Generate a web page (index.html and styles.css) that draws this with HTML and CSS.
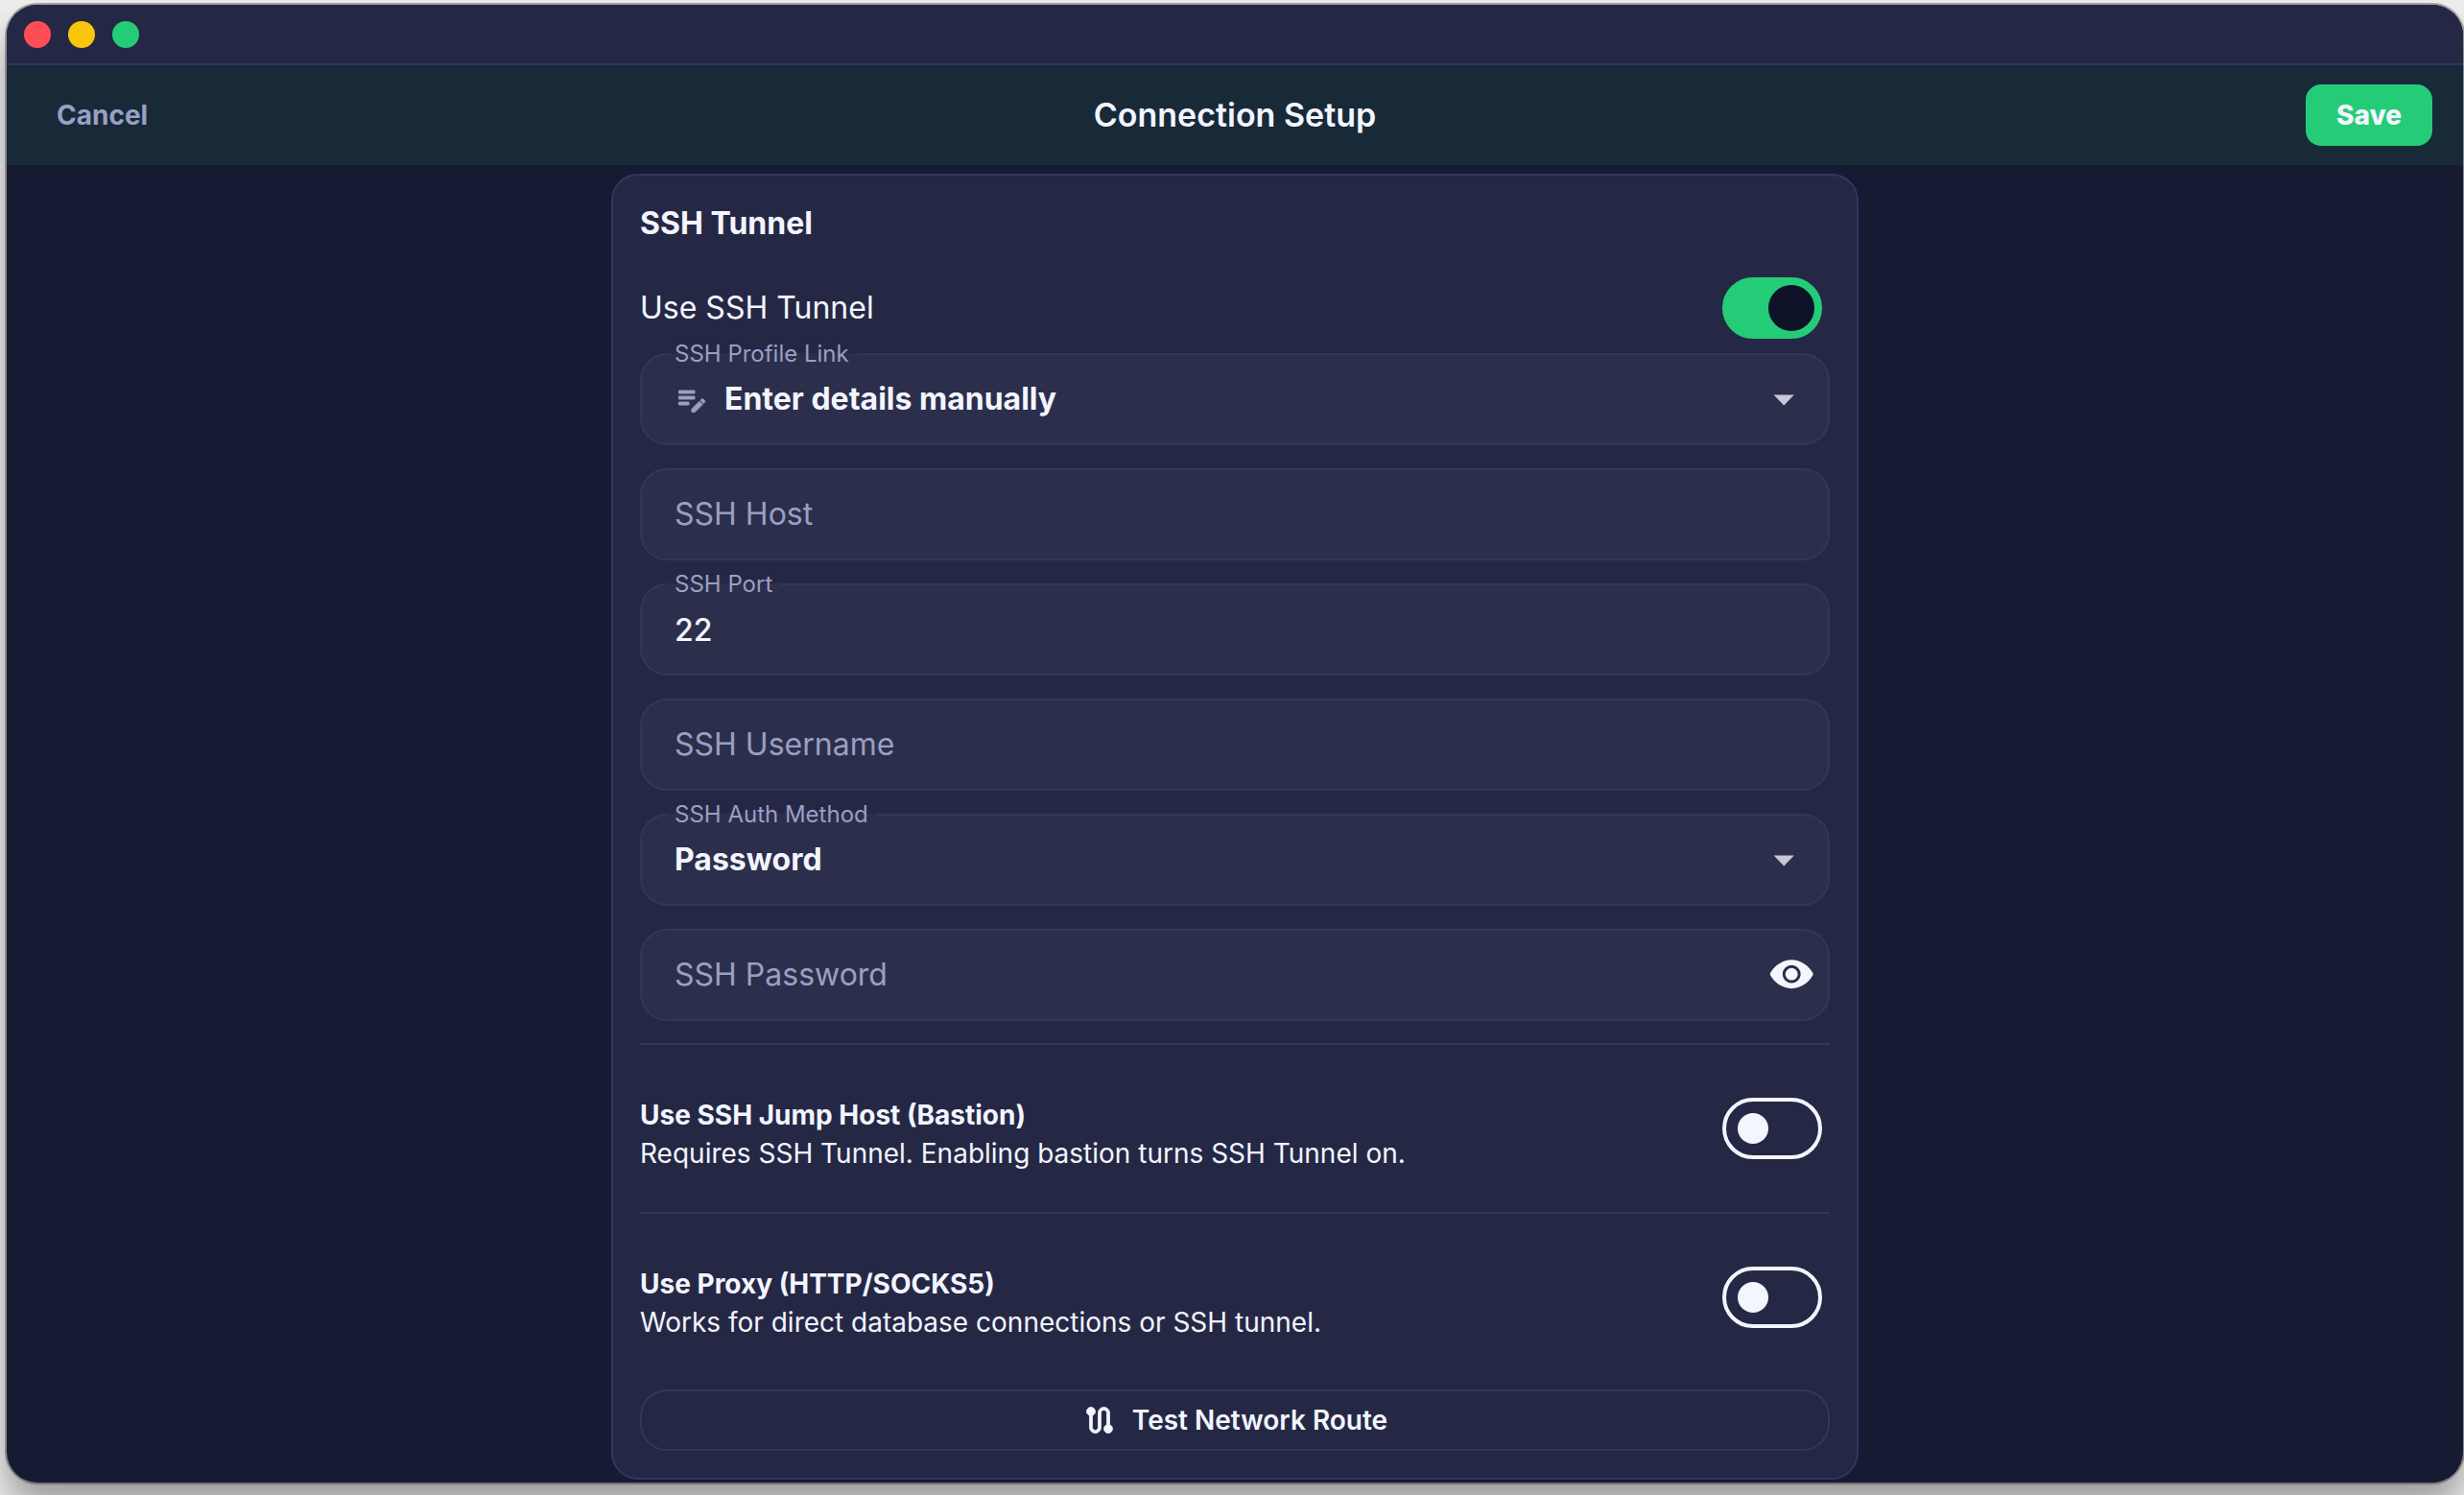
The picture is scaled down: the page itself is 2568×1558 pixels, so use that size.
FILE: index.html
```html
<!DOCTYPE html>
<html lang="en">
<head>
    <meta charset="UTF-8">
    <meta name="viewport" content="width=device-width, initial-scale=1.0">
    <title>Connection Setup</title>
    <link rel="stylesheet" href="styles.css">
</head>
<body>
    <div class="window">
        <div class="titlebar">
            <span class="dot dot-close"></span>
            <span class="dot dot-minimize"></span>
            <span class="dot dot-zoom"></span>
        </div>

        <header class="header">
            <button type="button" class="btn-cancel">Cancel</button>
            <h1>Connection Setup</h1>
            <button type="submit" form="ssh-form" class="btn-save">Save</button>
        </header>

        <main class="content">
            <form class="card" id="ssh-form">
                <h2>SSH Tunnel</h2>

                <div class="switch-row">
                    <label for="use-ssh">Use SSH Tunnel</label>
                    <input type="checkbox" class="switch" id="use-ssh" checked>
                </div>

                <div class="fields">
                    <div class="field has-icon">
                        <select id="ssh-profile">
                            <option>Enter details manually</option>
                        </select>
                        <label for="ssh-profile">SSH Profile Link</label>
                        <svg class="lead-icon" viewBox="0 0 24 24"><path d="M3 10h11v2H3v-2zm0-2h11V6H3v2zm0 8h7v-2H3v2zm15.01-3.13.71-.71c.39-.39 1.02-.39 1.41 0l.71.71c.39.39.39 1.02 0 1.41l-.71.71-2.12-2.12zm-.71.71-5.3 5.3V21h2.12l5.3-5.3-2.12-2.12z"/></svg>
                        <svg class="arrow" viewBox="0 0 24 24"><path d="M6.8 9.8h10.6L12.1 15.2z"/></svg>
                    </div>

                    <div class="field">
                        <input type="text" id="ssh-host" placeholder=" ">
                        <label for="ssh-host">SSH Host</label>
                    </div>

                    <div class="field">
                        <input type="text" id="ssh-port" placeholder=" " value="22">
                        <label for="ssh-port">SSH Port</label>
                    </div>

                    <div class="field">
                        <input type="text" id="ssh-user" placeholder=" ">
                        <label for="ssh-user">SSH Username</label>
                    </div>

                    <div class="field">
                        <select id="ssh-auth">
                            <option>Password</option>
                            <option>Private Key</option>
                        </select>
                        <label for="ssh-auth">SSH Auth Method</label>
                        <svg class="arrow" viewBox="0 0 24 24"><path d="M6.8 9.8h10.6L12.1 15.2z"/></svg>
                    </div>

                    <div class="field">
                        <input type="password" id="ssh-password" placeholder=" ">
                        <label for="ssh-password">SSH Password</label>
                        <button type="button" class="btn-eye" aria-label="Show password">
                            <svg viewBox="0 0 24 24"><path fill-rule="evenodd" d="M12.1 4.1C7.6 4.1 3.2 7 1.1 10.9c-.3.5-.3.9 0 1.4 2.1 3.9 6.5 6.8 11 6.8s8.9-2.9 11-6.8c.3-.5.3-.9 0-1.4-2.1-3.9-6.5-6.8-11-6.8zM12.1 16.3a4.7 4.7 0 1 1 0-9.4 4.7 4.7 0 0 1 0 9.4z"/><circle cx="12.1" cy="11.6" r="3.2"/></svg>
                        </button>
                    </div>
                </div>

                <div class="option">
                    <label for="use-bastion">
                        <strong>Use SSH Jump Host (Bastion)</strong>
                        <span>Requires SSH Tunnel. Enabling bastion turns SSH Tunnel on.</span>
                    </label>
                    <input type="checkbox" class="switch" id="use-bastion">
                </div>

                <div class="option">
                    <label for="use-proxy">
                        <strong>Use Proxy (HTTP/SOCKS5)</strong>
                        <span>Works for direct database connections or SSH tunnel.</span>
                    </label>
                    <input type="checkbox" class="switch" id="use-proxy">
                </div>

                <button type="button" class="btn-test">
                    <svg viewBox="0 0 24 24"><path d="M19 15.18V7c0-2.21-1.79-4-4-4s-4 1.79-4 4v10c0 1.1-.9 2-2 2s-2-.9-2-2V8.82C8.16 8.4 9 7.3 9 6c0-1.66-1.34-3-3-3S3 4.34 3 6c0 1.3.84 2.4 2 2.82V17c0 2.21 1.79 4 4 4s4-1.79 4-4V7c0-1.1.9-2 2-2s2 .9 2 2v8.18c-1.16.41-2 1.51-2 2.82 0 1.66 1.34 3 3 3s3-1.34 3-3c0-1.3-.84-2.4-2-2.82z"/></svg>
                    Test Network Route
                </button>
            </form>
        </main>
    </div>
</body>
</html>
```

FILE: styles.css
```css
:root {
    --bg: #171a33;
    --surface: #252845;
    --field: #2c2f4b;
    --line: #30375f;
    --text: #f3f5ff;
    --muted: #9a9fc4;
    --green: #24cc78;
}

* {
    box-sizing: border-box;
}

body {
    margin: 0;
    padding: 5px 1px 13px 7px;
    background: #eeeeee;
    color: var(--text);
    font-family: Inter, "Noto Sans", sans-serif;
    font-size: 32px;
    line-height: 40px;
}

button,
input,
select {
    font: inherit;
    color: inherit;
}

button {
    border: none;
    background: none;
    padding: 0;
    cursor: pointer;
}

svg {
    display: block;
    fill: currentColor;
}

.window {
    display: flex;
    flex-direction: column;
    min-height: calc(100vh - 18px);
    background: var(--bg);
    border-radius: 32px;
    overflow: hidden;
    box-shadow: 0 0 0 2px rgba(0, 0, 0, 0.3), 0 24px 36px rgba(0, 0, 0, 0.35);
}

.titlebar {
    display: flex;
    align-items: center;
    gap: 18px;
    height: 63px;
    padding: 0 18px;
    background: var(--surface);
    border-bottom: 2px solid #2f355f;
}

.dot {
    width: 28px;
    height: 28px;
    border-radius: 50%;
}

.dot-close {
    background: #ff4d55;
}

.dot-minimize {
    background: #f8c60c;
}

.dot-zoom {
    background: var(--green);
}

.header {
    display: grid;
    grid-template-columns: 1fr auto 1fr;
    align-items: center;
    height: 104px;
    padding: 0 32px 0 52px;
    background: #182938;
}

.header h1 {
    margin: 0;
    font-size: 34px;
    font-weight: 600;
    /* offsets the uneven side padding */
    padding-right: 20px;
}

.btn-cancel {
    justify-self: start;
    color: var(--muted);
    font-size: 28px;
    font-weight: 700;
}

.btn-save {
    justify-self: end;
    height: 64px;
    padding: 0 32px;
    border-radius: 16px;
    background: var(--green);
    font-size: 28px;
    font-weight: 800;
}

.content {
    flex: 1;
    padding: 9px 16px 3px;
}

.card {
    max-width: 1300px;
    margin: 0 auto;
    padding: 28px;
    background: var(--surface);
    border: 2px solid var(--line);
    border-radius: 28px;
}

.card h2 {
    margin: 0;
    font-size: 32px;
    font-weight: 700;
    line-height: 44px;
}

.switch-row {
    display: flex;
    align-items: center;
    justify-content: space-between;
    padding: 34px 8px 15px 0;
}

.switch {
    appearance: none;
    flex: none;
    display: flex;
    align-items: center;
    width: 104px;
    height: 64px;
    margin: 0;
    padding: 0 12px;
    border: 4px solid var(--text);
    border-radius: 32px;
    cursor: pointer;
}

.switch::before {
    content: "";
    width: 32px;
    height: 32px;
    border-radius: 50%;
    background: var(--text);
}

.switch:checked {
    justify-content: flex-end;
    padding: 0 4px;
    border-color: var(--green);
    background: var(--green);
}

.switch:checked::before {
    width: 48px;
    height: 48px;
    background: #0e1228;
}

.fields {
    display: grid;
    gap: 24px;
    padding-bottom: 23px;
}

.field {
    position: relative;
    height: 96px;
    background: var(--field);
    border: 2px solid var(--line);
    border-radius: 28px;
}

.field input,
.field select {
    appearance: none;
    display: block;
    width: 100%;
    height: 100%;
    padding: 0 88px 0 34px;
    border: none;
    border-radius: 26px;
    outline: none;
    background: none;
    font-weight: 500;
}

.field select {
    font-weight: 700;
}

.field option {
    background: var(--field);
}

.field.has-icon select {
    padding-left: 86px;
}

/* floating label, cuts a notch in the top border */
.field label {
    position: absolute;
    top: -15px;
    left: 26px;
    padding: 0 8px;
    color: var(--muted);
    font-size: 24px;
    line-height: 28px;
    background: linear-gradient(var(--field), var(--field)) center / 100% 2px no-repeat;
    pointer-events: none;
}

/* label rests inside the box while the input is empty */
.field input:placeholder-shown + label {
    top: 26px;
    font-size: 32px;
    line-height: 40px;
    background: none;
}

.lead-icon {
    position: absolute;
    top: 28px;
    left: 34px;
    width: 36px;
    height: 36px;
    color: var(--muted);
    stroke: currentColor;
    stroke-width: 0.6;
    stroke-linejoin: round;
    pointer-events: none;
}

.arrow {
    position: absolute;
    top: 22px;
    right: 22px;
    width: 48px;
    height: 48px;
    color: #c7c8d8;
    pointer-events: none;
}

.btn-eye {
    position: absolute;
    top: 22px;
    right: 14px;
}

.btn-eye svg {
    width: 48px;
    height: 48px;
}

.option {
    display: flex;
    align-items: flex-start;
    justify-content: space-between;
    height: 176px;
    padding: 53px 8px 0 0;
    border-top: 2px solid var(--line);
    font-size: 28px;
}

.option strong,
.option span {
    display: block;
}

.option strong {
    font-weight: 700;
}

.option .switch {
    margin-top: 2px;
}

.btn-test {
    display: flex;
    align-items: center;
    justify-content: center;
    gap: 16px;
    width: 100%;
    height: 64px;
    margin-top: 9px;
    border: 2px solid var(--line);
    border-radius: 28px;
    font-size: 28px;
    font-weight: 600;
}

.btn-test svg {
    width: 36px;
    height: 36px;
    stroke: currentColor;
    stroke-width: 0.5;
}
```
